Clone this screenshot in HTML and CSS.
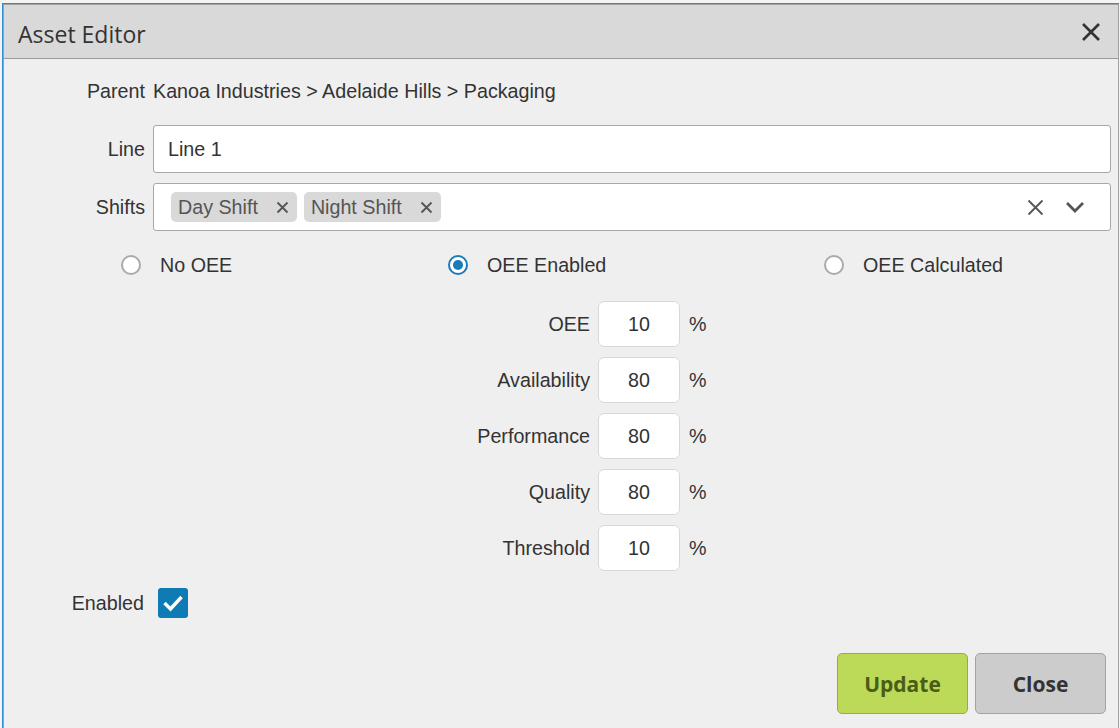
FILE: index.html
```html
<!DOCTYPE html>
<html>
<head>
<meta charset="utf-8">
<link rel="stylesheet" href="styles.css">
</head>
<body>
<div class="frame">
  <div class="dialog">
    <div class="header">
      <span class="title">Asset Editor</span>
      <svg class="hclose" width="20" height="20" viewBox="0 0 20 20"><path d="M2 2L18 18M18 2L2 18" stroke="#333" stroke-width="2.6" fill="none"/></svg>
    </div>
    <div class="body">
      <div class="row parent">
        <span class="label">Parent</span>
        <span class="value">Kanoa Industries &gt; Adelaide Hills &gt; Packaging</span>
      </div>
      <div class="row field">
        <span class="label">Line</span>
        <div class="input">Line 1</div>
      </div>
      <div class="row field shifts">
        <span class="label">Shifts</span>
        <div class="input multi">
          <span class="tag">Day Shift<svg width="13" height="13" viewBox="0 0 13 13"><path d="M1.5 1.5L11.5 11.5M11.5 1.5L1.5 11.5" stroke="#555" stroke-width="1.8" fill="none"/></svg></span>
          <span class="tag">Night Shift<svg width="13" height="13" viewBox="0 0 13 13"><path d="M1.5 1.5L11.5 11.5M11.5 1.5L1.5 11.5" stroke="#555" stroke-width="1.8" fill="none"/></svg></span>
          <span class="spacer"></span>
          <svg class="clear" width="17" height="17" viewBox="0 0 17 17"><path d="M1.5 1.5L15.5 15.5M15.5 1.5L1.5 15.5" stroke="#555" stroke-width="1.8" fill="none"/></svg>
          <svg class="chev" width="20" height="12" viewBox="0 0 20 12"><path d="M2 2L10 10L18 2" stroke="#555" stroke-width="2.8" fill="none"/></svg>
        </div>
      </div>
      <div class="radios">
        <label class="radio"><span class="dot"></span>No OEE</label>
        <label class="radio"><span class="dot on"></span>OEE Enabled</label>
        <label class="radio"><span class="dot"></span>OEE Calculated</label>
      </div>
      <div class="oee">
        <span class="olabel">OEE</span><div class="obox">10</div><span class="pct">%</span>
        <span class="olabel">Availability</span><div class="obox">80</div><span class="pct">%</span>
        <span class="olabel">Performance</span><div class="obox">80</div><span class="pct">%</span>
        <span class="olabel">Quality</span><div class="obox">80</div><span class="pct">%</span>
        <span class="olabel">Threshold</span><div class="obox">10</div><span class="pct">%</span>
      </div>
      <div class="enabled">
        <span class="elabel">Enabled</span>
        <span class="check"><svg width="30" height="30" viewBox="0 0 30 30"><path d="M6.5 15L12.5 21L23.5 9" stroke="#fff" stroke-width="3.4" fill="none"/></svg></span>
      </div>
      <div class="buttons">
        <button class="btn update">Update</button>
        <button class="btn close">Close</button>
      </div>
    </div>
  </div>
</div>
</body>
</html>
```
FILE: styles.css
```css
html, body {
  margin: 0;
  height: 100%;
  overflow: hidden;
}
body {
  background: #f4f4f4;
  padding: 3px 0 0 2px;
  box-sizing: border-box;
  font-family: "Liberation Sans", Arial, sans-serif;
  color: #333;
}
.frame {
  border-left: 1px solid #2b8ed0;
  border-top: 1px solid #2b8ed0;
  width: 1117px;
  height: 725px;
  box-sizing: border-box;
  overflow: hidden;
}
.dialog {
  border: 1px solid #a0a0a0;
  border-bottom: none;
  background: #efefef;
  width: 1116px;
  height: 724px;
  box-sizing: border-box;
}
.header {
  height: 54px;
  box-sizing: border-box;
  background: #d9d9d9;
  border-bottom: 1px solid #9a9a9a;
  display: flex;
  align-items: center;
  padding: 0 17px 0 14px;
}
.title {
  font-family: "Open Sans", sans-serif;
  font-size: 23px;
  color: #333;
  flex: 1;
  padding-top: 4px;
}
.hclose {
  margin-top: 1px;
}
.body {
  padding: 20px 12px 0 0;
}
.row {
  display: flex;
  align-items: center;
  font-size: 19.7px;
}
.label {
  width: 141px;
  text-align: right;
  margin-right: 8px;
  flex: none;
}
.parent {
  height: 24px;
}
.field {
  margin-top: 22px;
  margin-right: -5px;
}
.shifts {
  margin-top: 10px;
}
.input {
  flex: 1;
  height: 48px;
  box-sizing: border-box;
  background: #fff;
  border: 1px solid #a8a8a8;
  border-radius: 3px;
  display: flex;
  align-items: center;
  padding-left: 14px;
}
.multi {
  padding-left: 17px;
  padding-right: 25px;
}
.tag {
  display: flex;
  align-items: center;
  height: 30px;
  background: #d9d9d9;
  color: #555;
  border-radius: 5px;
  padding: 0 8px 0 7px;
  margin-right: 7px;
}
.tag svg {
  margin-left: 18px;
}
.spacer {
  flex: 1;
}
.clear {
  margin-right: 21px;
}
.radios {
  display: grid;
  grid-template-columns: 327px 376px auto;
  padding-left: 117px;
  margin-top: 22px;
  height: 24px;
  font-size: 19.7px;
}
.radio {
  display: flex;
  align-items: center;
}
.dot {
  width: 20px;
  height: 20px;
  box-sizing: border-box;
  border: 2px solid #aaa;
  border-radius: 50%;
  background: #fff;
  margin-right: 19px;
  position: relative;
}
.dot.on {
  border-color: #1a7bb9;
}
.dot.on::after {
  content: "";
  position: absolute;
  left: 3px;
  top: 3px;
  width: 10px;
  height: 10px;
  border-radius: 50%;
  background: #1a7bb9;
}
.oee {
  display: grid;
  grid-template-columns: 586px 82px auto;
  column-gap: 8px;
  row-gap: 10px;
  margin-top: 24px;
  font-size: 19.7px;
  align-items: center;
}
.olabel {
  text-align: right;
}
.obox {
  height: 46px;
  box-sizing: border-box;
  background: #fff;
  border: 1px solid #d8d8d8;
  border-radius: 6px;
  display: flex;
  align-items: center;
  justify-content: center;
}
.pct {
  margin-left: 1px;
}
.enabled {
  display: flex;
  align-items: center;
  margin-top: 17px;
  font-size: 19.7px;
}
.elabel {
  width: 140px;
  text-align: right;
  margin-right: 14px;
}
.check {
  width: 30px;
  height: 30px;
  background: #0f7bb5;
  border-radius: 3px;
  display: block;
}
.check svg {
  display: block;
}
.buttons {
  display: flex;
  justify-content: flex-end;
  gap: 7px;
  margin-top: 35px;
}
.btn {
  width: 131px;
  height: 61px;
  box-sizing: border-box;
  border-radius: 5px;
  font-family: "Open Sans", sans-serif;
  font-weight: 700;
  font-size: 21px;
  padding: 0;
}
.update {
  background: #bcd957;
  border: 1px solid #93b330;
  color: #4a5d17;
}
.close {
  background: #cccccc;
  border: 1px solid #a3a3a3;
  color: #333;
}
```
